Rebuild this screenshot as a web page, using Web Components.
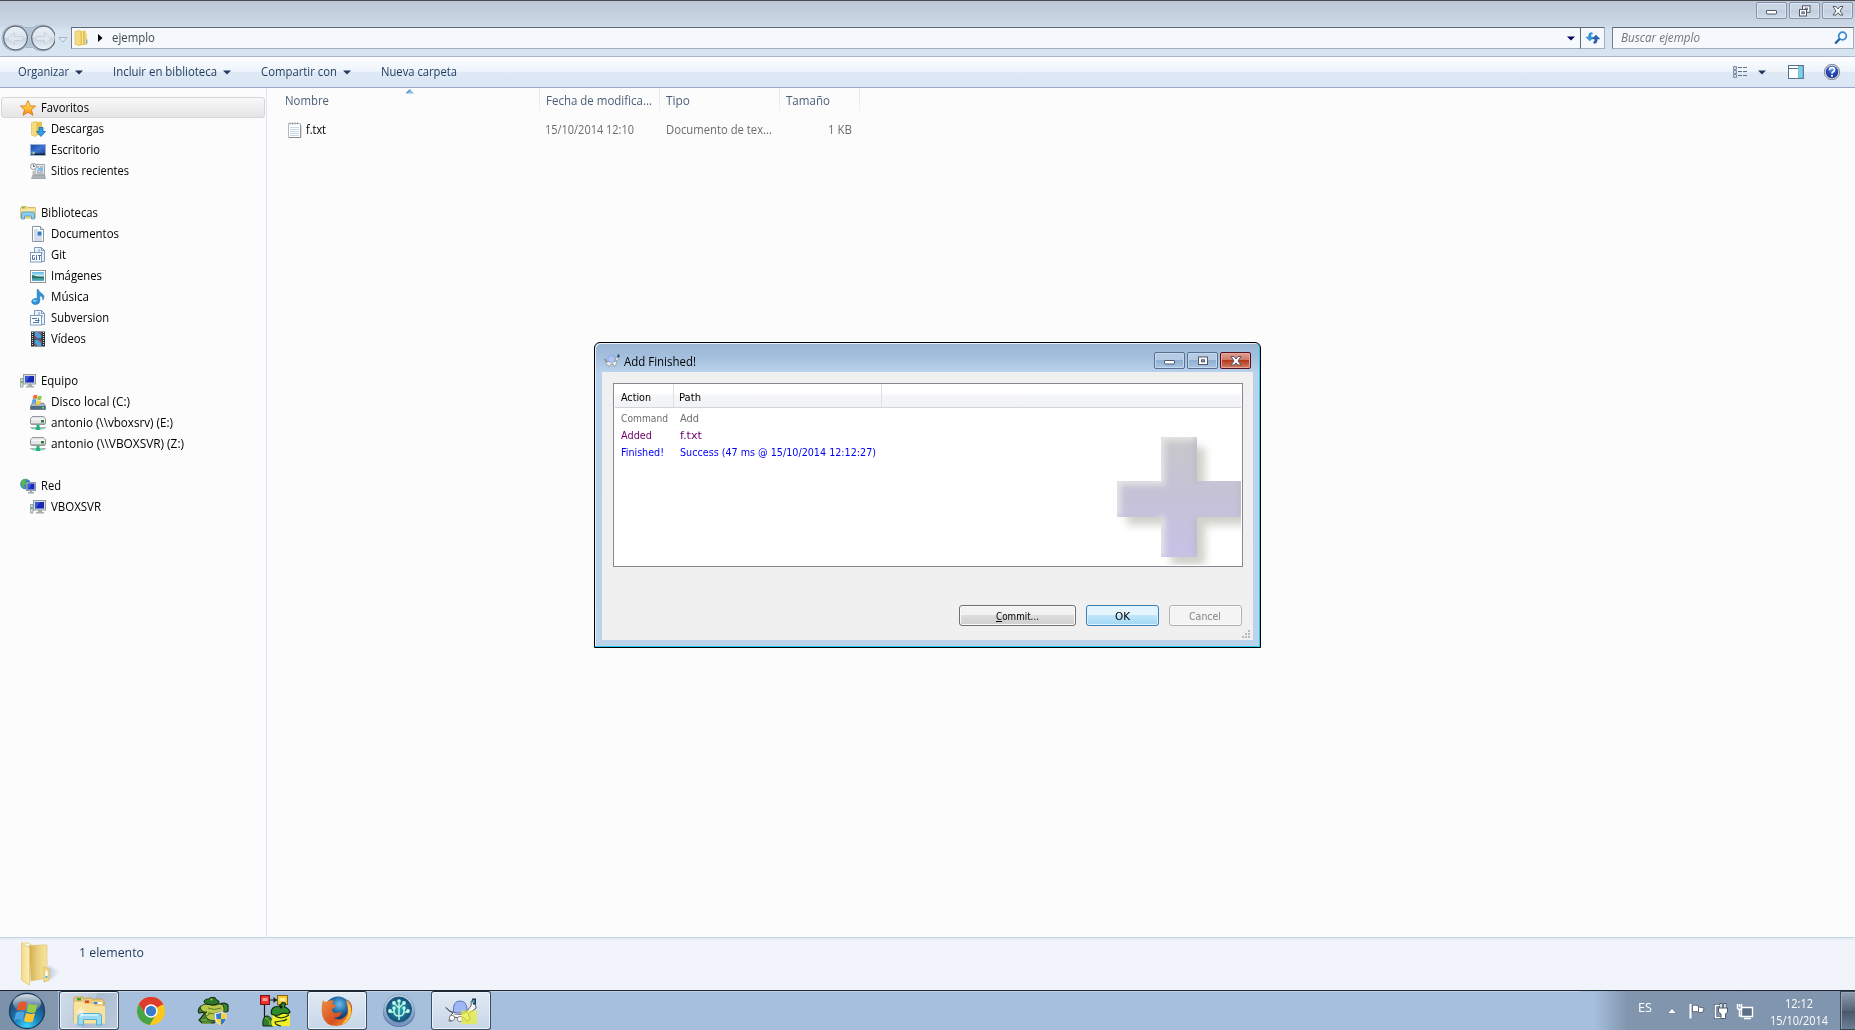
<!DOCTYPE html>
<html lang="es">
<head>
<meta charset="utf-8">
<title>ejemplo</title>
<style>
html,body{margin:0;height:100%;overflow:hidden}
body{font:12px/20px "Open Sans","Noto Sans",sans-serif;background:#fcfcfc}
</style>
</head>
<body>
<desk-top></desk-top>
<script>
const ICONS = {
folder:[16,16,`<path d="M1 1.5l5-1 1 1.5V15l-2 .8L1 14z" fill="#f5dc83" stroke="#d9b64a" stroke-width=".6"/><path d="M7 .8h4.5V15H5.8L7 14z" fill="#e3c254"/><path d="M8.5 1v13" stroke="#f7e69d"/><path d="M11.5 2.5L13 4v11l-1.500 .2z" fill="#f3d878"/><path d="M12.800 9.500v4" stroke="#3d97dc"/>`],
star:[16,16,`<defs><linearGradient id="g" x2="0" y2="1"><stop stop-color="#ffe877"/><stop offset=".6" stop-color="#fdb92e"/><stop offset="1" stop-color="#ee7a1c"/></linearGradient></defs><path d="M8 .6l2.200 5.200 5.400.3-4.200 3.600 1.600 5.600L8 12.200 3 15.300l1.500-5.600L.4 6.100l5.300-.3z" fill="url(#g)" stroke="#dd7a22" stroke-width=".9"/>`],
downloads:[16,16,`<path d="M1.500 1.500l5-1V15l-1 .5-4-1.500z" fill="#f5dc83" stroke="#d9b64a" stroke-width=".6"/><path d="M6.500 .8H12v13.500H6.500z" fill="#e3c254"/><path d="M9 6.500h4v4h2.500l-4.500 5-4.500-5H9z" fill="#2f9fe6" stroke="#1669b0" stroke-width=".8"/>`],
desktop:[16,16,`<defs><linearGradient id="g" x2="1" y2="1"><stop stop-color="#1b449c"/><stop offset=".5" stop-color="#3f77d8"/><stop offset="1" stop-color="#1a3a86"/></linearGradient></defs><rect x=".5" y="2.500" width="15" height="11" fill="url(#g)" stroke="#9fb2cf"/><path d="M1 11.500h14V13H1z" fill="#1a2232"/><path d="M1.500 9.500h3v3h-3z" fill="#5ba6ea"/><path d="M3 10h1.500v1.500H3z" fill="#f5c432"/>`],
recent:[16,16,`<path d="M5 1.500h9.500V12H5z" fill="#e2e7ea" stroke="#9ba6ad"/><path d="M7 4h2M10 4h3M7 8h2M10 8h3M7 10h6" stroke="#8a97a4"/><path d="M8 5h5v2.500H8z" fill="#72bdf0"/><circle cx="3.500" cy="3.500" r="3" fill="#f4f6f7" stroke="#91999f"/><path d="M3.500 1.500v2H5" fill="none" stroke="#566"/><path d="M3 12h11.500l1 3.500H1.500z" fill="#aeb3b6" stroke="#868c90" stroke-width=".6"/><path d="M2.500 8v5l2-1V8z" fill="#b7bdc0"/>`],
library:[16,16,`<path d="M.7 3l1-1.500h5l1 1h7.600V13H.7z" fill="#f3dc8c" stroke="#cfae52" stroke-width=".8"/><path d="M1 5h14" stroke="#fff3bd"/><path d="M2 2.800h3" stroke="#48a84b"/><path d="M1.500 14V9q0-2 2-2h9q2 0 2 2v5h-3v-3h-7v3z" fill="#8bcdee" stroke="#4a98c4" stroke-width=".8"/>`],
document:[16,16,`<path d="M2.500 .5h8l3 3v12h-11z" fill="#fff" stroke="#8b959c"/><path d="M10.500 .5v3h3" fill="#e4e8eb" stroke="#8b959c"/><path d="M4 4h4M4 6h3M4 8h3M4 10h8M4 12h8M4 14h8" stroke="#a9b8d2"/><rect x="7.500" y="5.500" width="4" height="4" fill="#2d7fcb"/>`],
git:[16,16,`<path d="M4.500 .5h7l3 3v11h-10z" fill="#e9f1fa" stroke="#7f9bbd"/><path d="M11.500 .5v3h3M9 2v4h4" fill="none" stroke="#7f9bbd"/><rect x=".5" y="5.500" width="11" height="9.500" fill="#fff" stroke="#7f9bbd"/><path d="M4.500 8.500h-2v4h2v-2M6.500 8v5M8 8.500h3M9.500 8.500V13" fill="none" stroke="#4b75ad"/>`],
images:[16,16,`<defs><linearGradient id="g" x2="0" y2="1"><stop stop-color="#5bb5ed"/><stop offset=".5" stop-color="#dff4f6"/><stop offset=".6" stop-color="#2c8178"/><stop offset="1" stop-color="#65b7da"/></linearGradient></defs><rect x=".5" y="2.500" width="15" height="12" fill="#fff" stroke="#8f9599"/><rect x="2" y="4" width="12" height="9" fill="url(#g)"/><path d="M2 7q5 2 12 1.500v1.500H2z" fill="#27705e"/>`],
music:[16,16,`<path d="M8.200 .4q.7 2.500 3.500 4.200Q15.500 7 12.800 11q.6-3.500-3-4.500v5.200q-.2 3.600-4.200 3.800Q1.500 15.300 1.700 12.300 2.300 9.500 6 9.500l1.200.3V.4z" fill="#2c95dc" stroke="#1b6fb2" stroke-width=".6"/><ellipse cx="4.800" cy="11.800" rx="2" ry="1" fill="#91d2f7"/>`],
subversion:[16,16,`<path d="M4.500 .5h7l3 3v11h-10z" fill="#e9f1fa" stroke="#7f9bbd"/><path d="M11.500 .5v3h3M9 2v4h4" fill="none" stroke="#7f9bbd"/><rect x=".5" y="5.500" width="11" height="9.500" fill="#fff" stroke="#7f9bbd"/><path d="M2 8.500h5M5 10.500h4.500M3 12.500h6M8.500 8v4" fill="none" stroke="#4b75ad"/>`],
video:[16,16,`<rect x="1" y=".5" width="14" height="15" fill="#222c33"/><path d="M2.500 1v14M13.500 1v14" stroke="#d5dde2" stroke-width="1.200" stroke-dasharray="1 1"/><rect x="4.500" y="1" width="7" height="6.500" fill="#4d9ede"/><rect x="4.500" y="8.500" width="7" height="6.500" fill="#4d9ede"/><path d="M4.500 4l3 3.500h-3zM8 1.500l3.500 3v-3zM4.500 12l3 3h-3zM8 9l3.500 3V9z" fill="#b3402f"/>`],
computer:[16,16,`<rect x="3.500" y="1.500" width="12" height="9.500" fill="#d8dcdf" stroke="#969da2"/><rect x="5" y="3" width="9" height="6.500" fill="#1726b4"/><path d="M5 3h5l-4 6.500H5z" fill="#3f6ee8" opacity=".7"/><path d="M8 11h4v2h2v1.500H6V13h2z" fill="#a6acb0"/><rect x=".5" y="5.500" width="2.500" height="8.500" fill="#d7dbdc" stroke="#8b9295" stroke-width=".7"/><path d="M1 8h1.500v2H1z" fill="#48b74a"/>`],
disk:[16,16,`<path d="M2.500 9h11l2 3v3.500H.5V12z" fill="#a9b5bd" stroke="#6f7a83" stroke-width=".7"/><path d="M.5 12h15v3.500H.5z" fill="#4c6c83"/><path d="M12 13h2v1.500h-2z" fill="#5fe163"/><path d="M3.500 1.500q2-1.500 4 0L6.700 5q-2-1.200-4 0z" fill="#ee6a31"/><path d="M8 1.700q2 1.300 4 0L11 5.500q-2 1-3.800 0z" fill="#8cc744"/><path d="M2.500 5.600q2-1.200 4 0l-.8 3.600q-2-1.200-4 0z" fill="#4f9fe6"/><path d="M7 6q2 1.300 4 0l-1 4q-2 1-4 0z" fill="#fccb35"/>`],
netdrive:[16,16,`<path d="M2.500 1.500h11l2 2.500v4q0 1-1 1h-13q-1 0-1-1V4z" fill="#e4e7e9" stroke="#83898d" stroke-width=".9"/><path d="M1 4.200h14" stroke="#fff"/><rect x="11" y="5" width="3" height="2.500" fill="#2f7d31"/><path d="M1 9.300h14" stroke="#777d80" stroke-width=".8"/><path d="M6.500 9.800h3V12h1v3h-5v-3h1z" fill="#29b37c"/><path d="M0 12.500h5.500M10.500 12.500H16" stroke="#b0b7b9"/><path d="M1.500 13.700h4M10.500 13.700h4" stroke="#55c79a"/>`],
network:[16,16,`<circle cx="5.500" cy="6" r="5.300" fill="#2d83d0"/><path d="M1 4q2-4 6-3L5 4l2 2-3 1 1 3.500Q1 9 1 4z" fill="#58b949"/><rect x="6.500" y="4.500" width="9" height="8" fill="#dde1e3" stroke="#8f989d"/><rect x="7.500" y="5.500" width="7" height="6" fill="#1b2dc1"/><path d="M7.500 5.500h4l-3 6h-1z" fill="#4774e7" opacity=".7"/><path d="M10 12.500h2V14h2v1.500H8V14h2z" fill="#a0a8ad"/>`],
textfile:[14,16,`<path d="M.5 1.500h12v14H.5z" fill="#fff" stroke="#b4babc"/><path d="M12.800 3v12.600H1" fill="none" stroke="#777d80" stroke-width=".8"/><path d="M2 .5v2M4.500 .5v2M7 .5v2M9.500 .5v2" stroke="#8e9699"/><path d="M2 5.500h9M2 7.500h9M2 9.500h9M2 11.500h9M2 13.500h9" stroke="#c4d9e2"/>`],
refresh:[16,16,`<path d="M6.800 2.500Q3.600 2.500 3.600 5.500V7H.8l4 4 4-4H6V5Q6 4 8 3.600z" fill="#3496dc" stroke="#2678b5" stroke-width=".4"/><path d="M9 13.500q3.200 0 3.200-3V9h2.700l-3.900-4-3.800 4h2.500v1.500q0 1.200-1.400 1.600z" fill="#2c62b4" stroke="#224e91" stroke-width=".4"/>`],
search:[14,14,`<circle cx="8.500" cy="5" r="3.800" fill="#f5fafe" stroke="#408bd0" stroke-width="1.800"/><path d="M5.500 8L1.200 12.500" stroke="#285da2" stroke-width="2.400"/>`],
views:[16,14,`<path d="M1.500 1.500h3v3h-3zM1.500 5.500h3v3h-3zM1.500 9.500h3v3h-3z" fill="#fff" stroke="#7f8d9e"/><path d="M2.500 2.500h1v1h-1zM2.500 6.500h1v1h-1zM2.500 10.500h1v1h-1z" fill="#356fae"/><path d="M6 2.500h4M11 2.500h4M6 6.500h4M11 6.500h4M6 10.500h4M11 10.500h4" stroke="#607087"/>`],
preview:[16,14,`<rect x=".5" y=".5" width="15" height="13" fill="#fff" stroke="#54738e"/><path d="M1 3.500h9" stroke="#54738e"/><rect x="10.500" y="1.500" width="4.500" height="11.500" fill="#79d0e5" stroke="#5b9fb9" stroke-width=".6"/>`],
help:[18,18,`<defs><radialGradient id="g" cy=".3"><stop stop-color="#5f8eea"/><stop offset="1" stop-color="#1b3baa"/></radialGradient></defs><circle cx="9" cy="9" r="7.700" fill="#d7d9dc" stroke="#7d8189" stroke-width=".9"/><circle cx="9" cy="9" r="6.200" fill="url(#g)"/><path d="M6.500 7.200Q6.700 4.700 9 4.700q2.500 0 2.500 2.200 0 1.100-1.400 1.800Q9 9.300 9 10.400" fill="none" stroke="#fff" stroke-width="1.700"/><circle cx="9" cy="12.800" r="1.100" fill="#fff"/>`],
back:[54,28,`<defs><linearGradient id="g" x2="0" y2="1"><stop stop-color="#e9f0f8"/><stop offset=".48" stop-color="#dbe5ef"/><stop offset=".52" stop-color="#c7d4e1"/><stop offset="1" stop-color="#eef4fa"/></linearGradient></defs><path d="M14 1q7 0 10 2.500h8Q35 1 42 1q12 1 12 13T42 27q-7 0-10-3.500h-8Q21 27 14 27 1 26 1 14T14 1z" fill="#b4c3d3" stroke="#a3b3c4" stroke-width=".8"/><circle cx="14.500" cy="14" r="11.800" fill="url(#g)" stroke="#626c78" stroke-width="1.200"/><circle cx="42.500" cy="14" r="11.800" fill="url(#g)" stroke="#626c78" stroke-width="1.200"/><path d="M6.500 14.500l7-6v4H22v4h-8.500v4zM50.500 14.500l-7-6v4H35v4h8.500v4z" fill="#dfe6ed" stroke="#c3cdd8" stroke-width=".8"/>`],
turtle:[16,14,`<path d="M.5 5l3 3.500M12 6.500l2.500-4" fill="none" stroke="#8a8a8a" stroke-width="1.200"/><path d="M2 8.500l3-1.500h6l2 1.500-1.500 3-1.500 1-1-2.500H7L5.500 12.500 3 11z" fill="#ececec" stroke="#7b7b7b" stroke-width=".8" stroke-dasharray="2 .7"/><ellipse cx="7.500" cy="5" rx="3.800" ry="3.600" fill="#afc5fa" stroke="#7f97d6" stroke-width=".7"/><path d="M11 4.500l3.500-1.500v2l-2 1.500z" fill="#f2f2f2" stroke="#888" stroke-width=".6"/><path d="M13.500 .5h2v2.800h-2z" fill="#1d4c73"/>`],
bigfolder:[44,46,`<defs><linearGradient id="g"><stop stop-color="#f4dc8c"/><stop offset="1" stop-color="#fbeeb6"/></linearGradient><linearGradient id="h"><stop stop-color="#d0ad4e"/><stop offset=".5" stop-color="#ecd080"/><stop offset="1" stop-color="#f6e49f"/></linearGradient><linearGradient id="s"><stop stop-color="#8893a8" stop-opacity=".6"/><stop offset="1" stop-color="#8893a8" stop-opacity="0"/></linearGradient><filter id="f"><feGaussianBlur stdDeviation="1"/></filter></defs><path d="M24 39l4-15 12 5-7 7z" fill="url(#s)" filter="url(#f)"/><path d="M9 3.500l18-.7V36l-16 3z" fill="url(#h)" stroke="#dcc06b" stroke-width=".6"/><path d="M24 25l5 2v11l-5 2z" fill="#f4db83" stroke="#d4b55d" stroke-width=".6"/><path d="M26.500 29v7" stroke="#fff" stroke-width="2"/><path d="M26.500 34v2" stroke="#4caee8" stroke-width="2"/><path d="M1.500 1l8 5v37l-8-5z" fill="url(#g)" stroke="#e2c46a" stroke-width=".8"/><path d="M1.500 1h7l4 2.500" fill="none" stroke="#e9d078"/>`],
orb:[38,38,`<defs><radialGradient id="g" cx=".5" cy=".95" r=".95"><stop stop-color="#3fd4ff"/><stop offset=".4" stop-color="#1a80b8"/><stop offset=".75" stop-color="#204e7a"/><stop offset="1" stop-color="#5c7b98"/></radialGradient><linearGradient id="h" x2="0" y2="1"><stop stop-color="#fff" stop-opacity=".75"/><stop offset="1" stop-color="#fff" stop-opacity=".08"/></linearGradient></defs><circle cx="19" cy="19" r="17.500" fill="url(#g)" stroke="#183c5b" stroke-width="1.300"/><ellipse cx="19" cy="11" rx="14" ry="9" fill="url(#h)"/><path d="M10.500 11.500q4-3.500 8.500-.8l-2 8q-4-2.200-8.500.5z" fill="#e8562a"/><path d="M20.500 11.500q4.500 2.700 9 .5l-2 8q-4.500 2-9-.5z" fill="#9aca43"/><path d="M8 20.700q4.500-2.800 8.500-.5l-2 8q-4-2.200-8.500.5z" fill="#4ba3e2"/><path d="M18 20.700q4.500 2.500 9 .6l-2 8q-4.500 2.200-9-.6z" fill="#fcc430"/>`],
explorer:[34,32,`<path d="M2 5V3l1-1h8l1 2h1l1-1h6l1 2h1l1-1h7l2 2v21H2z" fill="#e8c97b" stroke="#c59b45" stroke-width=".8"/><path d="M5 3h4v2.500H5z" fill="#35a63b"/><path d="M13 5.500h4V8h-4z" fill="#d9482e"/><path d="M22 7h8v2h-8z" fill="#fff"/><path d="M22 7h3.500v2H22z" fill="#3587d4"/><path d="M2 7h9l2 2h8l2 2h10v17.500H2z" fill="#f9e29b"/><path d="M6 30V21.500q0-3 3-3h17.500q3 0 3 3V30h-5v-5.500h-13V30z" fill="#9bdcf5" stroke="#53acd2"/><path d="M9 20h17" stroke="#dff6ff" stroke-width="1.400"/><path d="M9 12v10M4 17h10M6 14l6 6M12 14l-6 6" stroke="#fff" stroke-width=".8"/>`],
chrome:[30,30,`<circle cx="15" cy="15" r="14" fill="#fbc71d"/><path d="M15 15L2.900 8A14 14 0 0 1 27.100 8z" fill="#df3c2e"/><path d="M15 8.500h12.500a14 14 0 0 0-24.600-.5L9 18z" fill="#df3c2e"/><path d="M9.400 18.200L2.900 8A14 14 0 0 0 13.500 29l6.800-10.800z" fill="#45a547"/><circle cx="15" cy="15" r="6.700" fill="#fff"/><circle cx="15" cy="15" r="5.200" fill="#367cc9"/>`],
frog:[32,30,`<path d="M4 10q-4 4-2 7l6-1-4 6-2 2 3 3h12l3-4-3-4M23 8q5-2 8 1v6l-4 2" fill="#3e8535" stroke="#172f13" stroke-width="1.200"/><path d="M3 11q4-4 8-3 6 2 12 0 4 0 4 4 1 10-6 12-9 2-12-3-2-4 1-5-5 1-7-5z" fill="#b9c94d" stroke="#26421a"/><path d="M11 8q6 3 12 0M11 12q6 3 13 0M11 17q5 2 12-1M8 21l6-4" stroke="#5d7c22" fill="none"/><path d="M7 6q0-3 5-3 1-2.500 4-1.500 3-.5 3 2 4 1 3 4-7 3-13 .500z" fill="#2c7429" stroke="#112a10"/><circle cx="14.500" cy="3.500" r="1" fill="#b7d052"/><path d="M4 24h6M5 27h9" stroke="#88b843" stroke-width="1.200"/><path d="M17.500 17q4 0 6.500-2 2 2 6 2v6q-1 5-6 7-5.500-2-6.500-7z" fill="#f0f1ef" stroke="#999" stroke-width=".6"/><path d="M19 18q3 0 5-1.500V23h-4.500zM24 23h4.800q-1 4-4.800 6z" fill="#2b7dd2"/><path d="M24 16.500q2 1.500 5 1.500l-.2 5H24zM24 23v6q-4-2-4.700-6z" fill="#f8ce39"/>`],
frogflow:[32,32,`<path d="M11 5h7M5.500 9v14" stroke="#191919" stroke-width="1.200"/><path d="M14.500 2l3.500 3-3.500 3" fill="#191919"/><rect x="1.500" y=".5" width="9" height="9" fill="#ee3030" stroke="#731414"/><rect x="3.500" y="3" width="5" height="3" fill="#ff9d91"/><rect x="18.500" y=".5" width="10" height="9" fill="#f4c82b" stroke="#816717"/><rect x="20.500" y="3" width="6" height="3" fill="#fff09d"/><path d="M4 31q-1-8 3-10 6-1 7 10z" fill="#2d7d29" stroke="#112a10"/><path d="M6 23q5 1 5 7" stroke="#8acb48" fill="none"/><path d="M13 31q-2-6 1-8l-2-4q2-1 17-1l2 2v11z" fill="#f4ee29"/><path d="M12.500 19q-1-5 3-7l5-1 3-3.500 3 1-1 3.500q4 1 5.500 5l-2 2q-5-2-9 1-5 1-7.500-1z" fill="#2f8a2b" stroke="#112a10" stroke-width="1.200"/><path d="M16 21q7 4 14-1M22 31q-6-1-6-4l6-1q4 0 6-2" fill="none" stroke="#1b4213" stroke-width="1.200"/><circle cx="22" cy="12" r="1.500" fill="#111"/>`],
firefox:[32,32,`<defs><radialGradient id="g" cx=".55" cy=".3"><stop stop-color="#70bfea"/><stop offset=".6" stop-color="#236da9"/><stop offset="1" stop-color="#153d75"/></radialGradient><linearGradient id="h" x2="1" y2="1"><stop stop-color="#ee9140"/><stop offset=".6" stop-color="#d85020"/><stop offset="1" stop-color="#f5a52c"/></linearGradient></defs><circle cx="17" cy="14.500" r="13" fill="url(#g)"/><path d="M2 5q1 2 3 2 4-3 8-1-1 1-2 3l4 1q0 2-4 4 0 3 3 4 3 0 5-1 3 1 1 2-3 5-8 3 8 6 14-3 2-6-1-11 4 2 5 6 0-6-5-10 7 3 6 12-2 14-15 15Q3 31 1 19 0 11 2 5z" fill="url(#h)"/><path d="M25 5q6 5 5 13-2 9-9 11 7-7 6-14 0-6-2-10z" fill="#f9c944"/>`],
plant:[34,34,`<defs><linearGradient id="g" x2="0" y2="1"><stop stop-color="#bcd4e5"/><stop offset="1" stop-color="#6f8fba"/></linearGradient><radialGradient id="h"><stop stop-color="#24a7b0"/><stop offset="1" stop-color="#13507b"/></radialGradient></defs><ellipse cx="17" cy="18.500" rx="16" ry="14.500" fill="#5c7cae"/><circle cx="17" cy="16" r="15.500" fill="url(#g)" stroke="#829fba" stroke-width=".8"/><circle cx="17" cy="15.500" r="12.500" fill="url(#h)" stroke="#285780"/><path d="M17 26V9M17 22q-5 0-5-5v-3M17 22q5 0 5-5v-3M12 18H8M22 18h4M17 14l4-4M17 14l-4-4" fill="none" stroke="#b8f2e5" stroke-width="1.500"/><g fill="#c6fbe9"><circle cx="17" cy="7" r="1.800"/><circle cx="12" cy="9" r="1.900"/><circle cx="22" cy="9" r="1.900"/><circle cx="8" cy="17" r="1.900"/><circle cx="26" cy="17" r="1.900"/><circle cx="12" cy="14" r="1.700"/><circle cx="22" cy="14" r="1.700"/></g>`],
bigturtle:[32,26,`<path d="M.7 9.500q4 4 8 5l13-1 3-4 1.500-2V3h4v4l1 3-4 3-4 3 2 5-3 2-4-4q-5 2-9 0l-2 4H4l1-5 3-3q-5-2-7.300-5.500z" fill="#f8f8f8" stroke="#55585f"/><path d="M8.500 14q-1-11 6.500-11 7 0 7 9-6 5-13.500 2z" fill="#9fb8f5" stroke="#6077bd"/><path d="M9 16q7 2 14-2" fill="none" stroke="#777"/><circle cx="7" cy="20" r="2.700" fill="#f8f8f8" stroke="#777" stroke-width=".8"/><circle cx="15" cy="21" r="2.700" fill="#f8f8f8" stroke="#777" stroke-width=".8"/><path d="M27 .5h4v6h-3z" fill="#153653"/><path d="M28 2h1.500v3H28z" fill="#42a6c9"/><path d="M16.500 12.500H32V26H16.500z" fill="#e7ee32" opacity=".72"/>`],
flag:[18,18,`<path d="M2.500 2v14.500" stroke="#fff" stroke-width="2"/><path d="M4.500 3.500q3-1 6 .5v6q-3-1-6 0z" fill="#fff" stroke="#45566b" stroke-width=".8"/><path d="M11 5l5 1-1 4q-2 1-4 .5" fill="#fff" stroke="#45566b" stroke-width=".8"/>`],
power:[18,18,`<path d="M9 3.500H3.500v12H9" fill="none" stroke="#4b5b6f" stroke-width="3.200"/><path d="M9 3.500H3.500v12H9" fill="none" stroke="#fff" stroke-width="1.700"/><path d="M9 1v5M13 1v5" stroke="#4b5b6f" stroke-width="3"/><path d="M9 2v4M13 2v4" stroke="#fff" stroke-width="1.500"/><path d="M6.500 6h9v4l-2 2v4.500H9V12l-2.500-2z" fill="#fff" stroke="#4b5b6f"/>`],
lan:[18,18,`<path d="M5.500 5.500h11v9h-11z" fill="#5b6e86" stroke="#fff" stroke-width="1.400"/><path d="M8 16.500h7" stroke="#fff" stroke-width="1.500"/><path d="M1.500 2v3.500q0 2 2 2t2-2V2M3.500 2v3M3.500 8v6h2" fill="none" stroke="#fff" stroke-width="1.500"/>`],
min:[14,10,`<rect x="1.500" y="4.500" width="10" height="3.500" rx=".5" fill="#fff" stroke="#535666"/>`],
restore:[14,12,`<rect x="4.500" y=".8" width="7.500" height="6.500" fill="#fff" stroke="#535666"/><rect x="7" y="3" width="2.500" height="2" fill="#9fb1c9" stroke="#535666" stroke-width=".7"/><rect x="1.500" y="4.500" width="7" height="6.500" fill="#fff" stroke="#535666"/><rect x="3.800" y="6.800" width="2.500" height="2" fill="#9fb1c9" stroke="#535666" stroke-width=".8"/>`],
max:[14,12,`<rect x="2.500" y="2" width="9" height="7.500" fill="#fff" stroke="#535666"/><rect x="5.500" y="4.800" width="3" height="2" fill="#8eb0d3" stroke="#535666"/>`],
close:[14,12,`<path d="M2 1.500h3L7 4l2-2.500h3L9 6l3 4H9L7 7.800 5 10H2l3-4z" fill="#fff" stroke="#535666"/>`],
caret:[8,5,`<path d="M0 .5h8L4 4.500z" fill="#1e395b"/>`],
caretnavy:[8,5,`<path d="M0 .5h8L4 4.500z" fill="#00005c"/>`],
caretghost:[10,6,`<path d="M1 .5h8L5 5z" fill="#e8eff6" stroke="#a8b4c1"/>`],
right:[5,8,`<path d="M0 0v8l4.500-4z"/>`],
sort:[8,5,`<path d="M0 4.500L4 .5l4 4z" fill="#7cc0de"/><path d="M0 4.500L4 .5" stroke="#31608b"/>`],
up:[10,6,`<path d="M.5 5.500l4.500-5 4.500 5z" fill="#fff" stroke="#5a6a80" stroke-width=".6"/>`],
grip:[10,9,`<g fill="#b9b9b9"><path d="M7 0h2v2H7zM7 3h2v2H7zM4 3h2v2H4zM7 6h2v2H7zM4 6h2v2H4zM1 6h2v2H1z"/></g>`],
plus:[132,128,`<defs>
<linearGradient id="v" x2="0" y2="1"><stop stop-color="#c8c8cb"/><stop offset=".45" stop-color="#c5c2d6"/><stop offset="1" stop-color="#c8c1e6"/></linearGradient>
<filter id="b" x="-20%" y="-20%" width="140%" height="140%"><feGaussianBlur stdDeviation="4"/></filter>
<filter id="e" x="-20%" y="-20%" width="140%" height="140%"><feGaussianBlur stdDeviation="3"/></filter>
<clipPath id="c"><path d="M48 0h36v44h44v36H84v40H48V80H4V44h44z"/></clipPath></defs>
<path d="M58 10h34v44h44v34H92v40H58V88H14V54h44z" fill="#cfd0c9" filter="url(#b)"/>
<g clip-path="url(#c)"><path d="M48 0h36v44h44v36H84v40H48V80H4V44h44z" fill="url(#v)"/>
<path d="M48 120V80M4 80V44h44V0h36" fill="none" stroke="#e9e9e9" stroke-width="7" filter="url(#e)"/>
<path d="M84 0v44M128 44v36M84 80v40" fill="none" stroke="#b4b4bc" stroke-width="3" filter="url(#e)"/></g>`]
};

class Base extends HTMLElement{
  constructor(){super();this.attachShadow({mode:'open'});}
  connectedCallback(){ if(!this.shadowRoot.firstChild) this.shadowRoot.innerHTML=this.view(); }
  at(n,d=''){return this.getAttribute(n)??d;}
}
class SysIcon extends Base{
  view(){const [w,h,b]=ICONS[this.at('name')];
    return `<style>:host{display:block;flex:none;width:${w}px;height:${h}px}svg{display:block}</style><svg width="${w}" height="${h}" viewBox="0 0 ${w} ${h}">${b}</svg>`;}
}
/* Text condensed or widened to an exact advance width. */
class UiLabel extends Base{
  view(){return `<style>:host{display:block;flex:none;width:${this.at('w')}px;white-space:pre}span{display:inline-block;transform-origin:0 50%}</style><span><slot></slot></span>`;}
  connectedCallback(){super.connectedCallback();
    const s=this.shadowRoot.querySelector('span');
    s.style.transform=`scaleX(${+this.at('w')/s.getBoundingClientRect().width})`;}
}
class NavItem extends Base{
  view(){const top=this.hasAttribute('root');
    return `<style>:host{display:flex;align-items:center;box-sizing:border-box;height:21px;margin:0 1px;padding-left:${top?18:28}px;gap:5px;border:1px solid transparent;border-radius:3px;color:#000}
    :host([root]){margin-top:21px}:host([selected]){margin-top:0;border-color:#d6d6d6;background:linear-gradient(#f9f9f9,#e5e5e5)}</style>
    <sys-icon name="${this.at('icon')}"></sys-icon><ui-label w="${this.at('w')}"><slot></slot></ui-label>`;}
  connectedCallback(){
    if(this.shadowRoot.firstChild) return;
    const t=this.textContent;
    this.shadowRoot.innerHTML=this.view().replace('<slot></slot>',t);
  }
}
class WinButton extends Base{
  view(){return `<style>:host{display:flex;box-sizing:border-box;align-items:center;justify-content:center;width:31px;height:17px;border:1px solid #8792ac;border-radius:2px;box-shadow:inset 0 0 0 1px #dbe5f0;background:linear-gradient(#cbd6e4 50%,#c1cedf 50%,#cfdbe9)}
  :host([kind=blue]){border-color:#566f92;box-shadow:inset 0 0 0 1px #c5d8ec;background:linear-gradient(#b4cbe3 48%,#8fb0d2 50%,#a9c6e4)}
  :host([kind=red]){border-color:#521220;box-shadow:inset 0 0 0 1px #e3a79c;background:linear-gradient(#dfa093,#cf7866 48%,#b5391f 50%,#d17c62)}</style><sys-icon name="${this.at('icon')}"></sys-icon>`;}
}
class AddressBar extends Base{
  view(){return `<style>:host{display:flex;height:29px;align-items:flex-start;color:#3f4650;line-height:20px}
  .nav{margin:-3px 0 0 1px}.ghost{margin:10px 3px 0 3px}
  .f{display:flex;align-items:center;box-sizing:border-box;height:22px;background:#f5f9fd;border:1px solid #a5afba;border-top-color:#5f6770;border-left-color:#747c85}
  .addr{width:1510px;padding-left:2px}.addr ui-label{margin-left:8.5px}.r{margin-left:8px}.d{margin-left:auto;margin-right:5px}
  .go{width:25px;margin-left:-1px;justify-content:center;border-left-color:#5f6770}
  .s{flex:1;margin:0 1px 0 7px;padding:0 5px 0 8px;justify-content:space-between;font-style:italic;color:#727579}</style>
  <sys-icon class="nav" name="back"></sys-icon><sys-icon class="ghost" name="caretghost"></sys-icon>
  <div class="f addr"><sys-icon name="folder"></sys-icon><sys-icon class="r" name="right"></sys-icon><ui-label w="43">ejemplo</ui-label><sys-icon class="d" name="caretnavy"></sys-icon></div>
  <div class="f go"><sys-icon name="refresh"></sys-icon></div>
  <div class="f s"><ui-label w="79">Buscar ejemplo</ui-label><sys-icon name="search"></sys-icon></div>`;}
}
class CommandBar extends Base{
  view(){return `<style>:host{display:flex;align-items:center;box-sizing:border-box;height:32px;padding:0 14px 0 18px;border-top:1px solid #a9b7c9;border-bottom:1px solid #9aaac4;background:linear-gradient(#fdfeff,#eef4fc 48%,#dfe9f6 50%,#dae6f4);box-shadow:inset 0 1px #fff;color:#1e395b}
  .c{margin:0 30px 0 6px}.v{margin-left:auto}.c2{margin:0 22px 0 10px}.h{margin-left:19px}</style>
  <ui-label w="51">Organizar</ui-label><sys-icon class="c" name="caret"></sys-icon>
  <ui-label w="104">Incluir en biblioteca</ui-label><sys-icon class="c" name="caret"></sys-icon>
  <ui-label w="76">Compartir con</ui-label><sys-icon class="c" name="caret"></sys-icon>
  <ui-label w="76">Nueva carpeta</ui-label>
  <sys-icon class="v" name="views"></sys-icon><sys-icon class="c2" name="caret"></sys-icon><sys-icon name="preview"></sys-icon><sys-icon class="h" name="help"></sys-icon>`;}
}
class NavPane extends Base{
  view(){return `<style>:host{display:block;box-sizing:border-box;width:267px;padding-top:9px;border-right:1px solid #d6e5f8}</style>
  <nav-item root selected icon="star" w="48">Favoritos</nav-item>
  <nav-item icon="downloads" w="53">Descargas</nav-item>
  <nav-item icon="desktop" w="49">Escritorio</nav-item>
  <nav-item icon="recent" w="78">Sitios recientes</nav-item>
  <nav-item root icon="library" w="57">Bibliotecas</nav-item>
  <nav-item icon="document" w="68">Documentos</nav-item>
  <nav-item icon="git" w="15">Git</nav-item>
  <nav-item icon="images" w="51">Imágenes</nav-item>
  <nav-item icon="music" w="38">Música</nav-item>
  <nav-item icon="subversion" w="58">Subversion</nav-item>
  <nav-item icon="video" w="35">Vídeos</nav-item>
  <nav-item root icon="computer" w="37">Equipo</nav-item>
  <nav-item icon="disk" w="79">Disco local (C:)</nav-item>
  <nav-item icon="netdrive" w="122">antonio (\\\\vboxsrv) (E:)</nav-item>
  <nav-item icon="netdrive" w="133">antonio (\\\\VBOXSVR) (Z:)</nav-item>
  <nav-item root icon="network" w="20">Red</nav-item>
  <nav-item icon="computer" w="50">VBOXSVR</nav-item>`;}
}
class FileList extends Base{
  view(){return `<style>:host{display:block;flex:1}
  .h,.r{display:flex}.h{height:25px;color:#4c607a}.h>div{display:flex;box-sizing:border-box;padding:3px 0 0 6px;border-right:1px solid;border-image:linear-gradient(#dce8f5,#e3edf8 60%,transparent) 1}
  .n{width:273px}.f{width:120px}.t{width:120px}.z{width:80px}
  .h .n{padding-left:18px}.sort{margin:-2px 0 0 76.500px}
  .r{margin-top:7px;align-items:center;color:#6d6d6d;height:20px}.r>div{display:flex;align-items:center;box-sizing:border-box;padding-left:6px}
  .r .f{padding-left:5px}.r .n{padding-left:21px;gap:4px;color:#000}.r .z{justify-content:flex-end;padding-right:8px}</style>
  <div class="h"><div class="n"><ui-label w="44">Nombre</ui-label><sys-icon class="sort" name="sort"></sys-icon></div><div class="f"><ui-label w="106">Fecha de modifica...</ui-label></div><div class="t"><ui-label w="24">Tipo</ui-label></div><div class="z"><ui-label w="44">Tamaño</ui-label></div></div>
  <div class="r"><div class="n"><sys-icon name="textfile"></sys-icon><ui-label w="20">f.txt</ui-label></div><div class="f"><ui-label w="89">15/10/2014 12:10</ui-label></div><div class="t"><ui-label w="106">Documento de tex...</ui-label></div><div class="z"><ui-label w="24">1 KB</ui-label></div></div>`;}
}
class DetailsPane extends Base{
  view(){return `<style>:host{display:flex;box-sizing:border-box;height:53px;padding:4px 0 0 20px;gap:15px;border-top:1px solid #c5d3e4;background:#f1f5fb;box-shadow:inset 0 2px #e5edf7;color:#1e395b;font-size:13px}</style><sys-icon name="bigfolder"></sys-icon><ui-label w="65">1 elemento</ui-label>`;}
}
class ExplorerWindow extends Base{
  view(){return `<style>:host{display:flex;flex-direction:column;height:990px;background:#fcfcfc}
  .chrome{height:56px;box-sizing:border-box;border-top:1px solid #4a4c52;background:linear-gradient(#bdc8d7,#ccd8e6 24px,#d7e4f2 30px,#d6e3f1)}
  .t{display:flex;justify-content:flex-end;gap:2px;height:26px;padding:1px 2px 0 0;box-sizing:border-box}
  .m{display:flex;flex:1}</style>
  <div class="chrome"><div class="t"><win-button icon="min"></win-button><win-button icon="restore"></win-button><win-button icon="close"></win-button></div><address-bar></address-bar></div>
  <command-bar></command-bar><div class="m"><nav-pane></nav-pane><file-list></file-list></div><details-pane></details-pane>`;}
}
class PushButton extends Base{
  view(){return `<style>:host{display:flex;box-sizing:border-box;height:21px;align-items:center;justify-content:center;padding:1px 1px 0 0;border:1px solid #707070;border-radius:3px;box-shadow:inset 0 0 0 1px #fafafa;background:linear-gradient(#f2f2f2 48%,#dddddd 50%,#cfcfcf);color:#000}
  :host([kind=default]){border-color:#3c7fb1;box-shadow:inset 0 0 0 1px #d9f5fe;background:linear-gradient(#e5f5fd 48%,#bfe6fb 50%,#a3d8f5)}
  :host([kind=disabled]){border-color:#adb2b5;background:#f4f4f4;color:#838383}</style><slot></slot>`;}
}
class ProgressDialog extends Base{
  view(){return `<style>:host{display:block;position:absolute;left:594px;top:342px;width:667px;height:306px;box-sizing:border-box;border:1px solid #000;border-radius:6px 6px 0 0;background:linear-gradient(#9ab5d3,#a6c1df 15px,#b9d1ea 29px,#bcd3ec);box-shadow:inset -1px -1px #22d0ee,inset 1px 1px #e6f0fa;padding:0 7px;overflow:hidden}
  .t{display:flex;height:29px;align-items:flex-start;gap:2px;padding-right:2px}.t sys-icon{margin:11px 2px 0 2px}.t ui-label{margin-top:9px;margin-right:auto}.t win-button{margin-top:9px}
  .b{box-sizing:border-box;height:268px;background:#f0f0f0;padding:11px 10px 0 11px;font:11px/17px "DejaVu Sans Condensed","DejaVu Sans",sans-serif;font-stretch:condensed}
  .l{display:flex;flex-direction:column;box-sizing:border-box;height:184px;border:1px solid #828790;background:#fff;position:relative}
  .h{display:flex;height:24px;margin:0 1px;box-sizing:border-box;border-bottom:1px solid #d5d5d5;background:linear-gradient(#fff 45%,#f5f6f8 46%,#f2f3f5)}
  .h div{box-sizing:border-box;border-right:1px solid #dedfe1;padding:5px 0 0 6px}.h .p{padding-left:5px}.a{width:59px}.p{width:208px}
  .rows{padding-top:2px}.r{display:flex;height:17px;padding-left:7px}.r span{display:block;width:59px}
  .mark{position:absolute;right:-4px;top:53px}.clip{position:absolute;inset:0 1px 1px 0;overflow:hidden}
  .f{display:flex;justify-content:flex-end;gap:10px;margin:38px 1px 0 0}.c{width:117px}.o{width:73px}.g{margin:4px -8px 0 auto}</style>
  <div class="t"><sys-icon name="turtle"></sys-icon><ui-label w="72">Add Finished!</ui-label><win-button kind="blue" icon="min"></win-button><win-button kind="blue" icon="max"></win-button><win-button kind="red" icon="close"></win-button></div>
  <div class="b"><div class="l"><div class="clip"><sys-icon class="mark" name="plus"></sys-icon></div>
  <div class="h"><div class="a"><ui-label w="30">Action</ui-label></div><div class="p"><ui-label w="22">Path</ui-label></div></div>
  <div class="rows"><div class="r" style="color:#6d6d6d"><span><ui-label w="47">Command</ui-label></span><ui-label w="19">Add</ui-label></div>
  <div class="r" style="color:#6e006e"><span><ui-label w="31">Added</ui-label></span><ui-label w="22">f.txt</ui-label></div>
  <div class="r" style="color:#0000f5"><span><ui-label w="43">Finished!</ui-label></span><ui-label w="196">Success (47 ms @ 15/10/2014 12:12:27)</ui-label></div></div></div>
  <div class="f"><push-button class="c"><ui-label w="43"><u>C</u>ommit...</ui-label></push-button><push-button class="o" kind="default"><ui-label w="15">OK</ui-label></push-button><push-button class="o" kind="disabled"><ui-label w="32">Cancel</ui-label></push-button></div>
  <sys-icon class="g" name="grip"></sys-icon></div>`;}
}
class TaskButton extends Base{
  view(){return `<style>:host{display:flex;align-items:center;justify-content:center;box-sizing:border-box;width:62px;height:39px}
  :host([open]){width:60px;margin:0 1px;border:1px solid #3d4d63;border-top-color:#202833;border-radius:3px;box-shadow:inset 0 0 0 1px #edf3fa;background:linear-gradient(115deg,#d3deeb,#b9c8da 50%,#a9bbd1 51%,#bccbdd)}
  :host([open=light]){background:linear-gradient(#e1eaf4,#c7d6e8)}</style><sys-icon name="${this.at('icon')}"></sys-icon>`;}
}
class TaskBar extends Base{
  view(){return `<style>:host{display:flex;box-sizing:border-box;height:40px;border-top:1px solid #20262f;background:#a5bfdd;color:#fff;box-shadow:inset 0 1px #bdd0e6}
  .s{display:flex;align-items:center;justify-content:center;width:58px;box-sizing:border-box;padding-right:4px;background:linear-gradient(90deg,#7b90a9,#8598b0)}
  .tray{display:flex;margin-left:auto;width:275px;box-sizing:border-box;align-items:flex-start;padding-left:58px;background:linear-gradient(90deg,#a5bfdd,#a5bfdd 14px,#8195ad 48px,#8095ae)}
  .es{margin-top:7px}.u{margin:17px 11px 0 15px}.i{margin:11px 6px 0 0}
  .clock{display:flex;flex-direction:column;align-items:center;width:62px;margin-left:8px;line-height:17px;padding-top:4px}
  .d{margin-left:auto;width:15px;height:39px;box-sizing:border-box;border:1px solid #36465a;border-right:0;background:linear-gradient(#8d9cad,#566477 50%,#485769 51%,#6d7f95);box-shadow:inset 1px 1px #96a6b9}</style>
  <div class="s"><sys-icon name="orb"></sys-icon></div>
  <task-button open icon="explorer"></task-button><task-button icon="chrome"></task-button><task-button icon="frog"></task-button><task-button icon="frogflow"></task-button><task-button open="light" icon="firefox"></task-button><task-button icon="plant"></task-button><task-button open="light" icon="bigturtle"></task-button>
  <div class="tray"><ui-label class="es" w="14">ES</ui-label><sys-icon class="u" name="up"></sys-icon><sys-icon class="i" name="flag"></sys-icon><sys-icon class="i" name="power"></sys-icon><sys-icon class="i" name="lan"></sys-icon>
  <div class="clock"><ui-label w="28">12:12</ui-label><ui-label w="58">15/10/2014</ui-label></div><div class="d"></div></div>`;}
}
class DeskTop extends Base{
  view(){return `<style>:host{display:block;position:relative;width:1855px;height:1030px;overflow:hidden}</style><explorer-window></explorer-window><task-bar></task-bar><progress-dialog></progress-dialog>`;}
}
[['desk-top',DeskTop],['explorer-window',ExplorerWindow],['task-bar',TaskBar],['progress-dialog',ProgressDialog],['address-bar',AddressBar],['command-bar',CommandBar],['nav-pane',NavPane],['file-list',FileList],['details-pane',DetailsPane],['nav-item',NavItem],['win-button',WinButton],['push-button',PushButton],['task-button',TaskButton],['sys-icon',SysIcon],['ui-label',UiLabel]].forEach(([n,c])=>customElements.define(n,c));
</script>
</body>
</html>
